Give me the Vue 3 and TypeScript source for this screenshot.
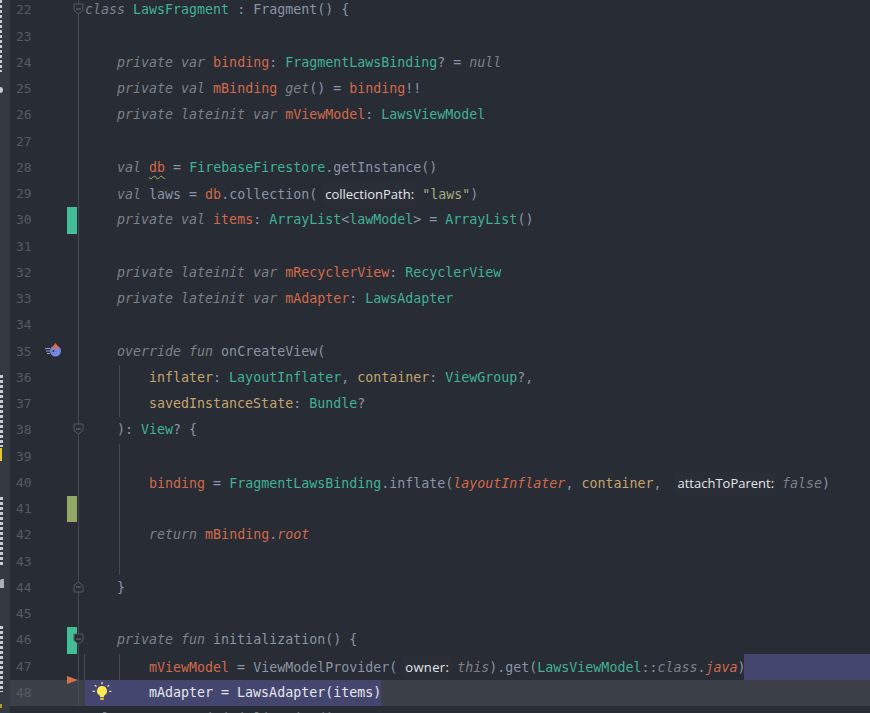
<script setup lang="ts">
type Tok = { t: string; c?: string }
type Row = { n: number; toks: Tok[]; mark?: string; fold?: string; guide?: boolean; cur?: boolean; sel?: boolean }

const k = (t: string) => ({ t, c: 'kw' })
const v = (t: string) => ({ t, c: 'prop' })
const ty = (t: string) => ({ t, c: 'type' })
const p = (t: string) => ({ t, c: 'plain' })
const par = (t: string) => ({ t, c: 'param' })
const hint = (t: string) => ({ t, c: 'hint' })

const rows: Row[] = [
  { n: 22, fold: 'open', toks: [k('class'), p(' '), ty('LawsFragment'), p(' : Fragment() {')] },
  { n: 23, toks: [] },
  { n: 24, toks: [p('    '), k('private var'), p(' '), v('binding'), p(': '), ty('FragmentLawsBinding'), p('? = '), k('null')] },
  { n: 25, toks: [p('    '), k('private val'), p(' '), v('mBinding'), p(' '), k('get'), p('() = '), v('binding'), p('!!')] },
  { n: 26, toks: [p('    '), k('private lateinit var'), p(' '), v('mViewModel'), p(': '), ty('LawsViewModel')] },
  { n: 27, toks: [] },
  { n: 28, toks: [p('    '), k('val'), p(' '), { t: 'db', c: 'prop warn' }, p(' = '), ty('FirebaseFirestore'), p('.getInstance()')] },
  { n: 29, toks: [p('    '), k('val'), p(' laws = '), v('db'), p('.collection( '), hint('collectionPath:'), { t: ' "laws"', c: 'str' }, p(')')] },
  { n: 30, mark: 'green', toks: [p('    '), k('private val'), p(' '), v('items'), p(': '), ty('ArrayList'), p('<'), ty('lawModel'), p('> = '), ty('ArrayList'), p('()')] },
  { n: 31, toks: [] },
  { n: 32, toks: [p('    '), k('private lateinit var'), p(' '), v('mRecyclerView'), p(': '), ty('RecyclerView')] },
  { n: 33, toks: [p('    '), k('private lateinit var'), p(' '), v('mAdapter'), p(': '), ty('LawsAdapter')] },
  { n: 34, toks: [] },
  { n: 35, toks: [p('    '), k('override fun'), p(' onCreateView(')] },
  { n: 36, guide: true, toks: [p('        '), par('inflater'), p(': '), ty('LayoutInflater'), p(', '), par('container'), p(': '), ty('ViewGroup'), p('?,')] },
  { n: 37, guide: true, toks: [p('        '), par('savedInstanceState'), p(': '), ty('Bundle'), p('?')] },
  { n: 38, fold: 'open', toks: [p('    ): '), ty('View'), p('? {')] },
  { n: 39, guide: true, toks: [] },
  { n: 40, guide: true, toks: [p('        '), v('binding'), p(' = '), ty('FragmentLawsBinding'), p('.inflate('), { t: 'layoutInflater', c: 'prop it' }, p(', '), par('container'), p(',  '), hint('attachToParent:'), p(' '), k('false'), p(')')] },
  { n: 41, guide: true, mark: 'olive', toks: [] },
  { n: 42, guide: true, toks: [p('        '), k('return'), p(' '), v('mBinding'), p('.'), { t: 'root', c: 'prop it' }] },
  { n: 43, guide: true, toks: [] },
  { n: 44, fold: 'close', toks: [p('    }')] },
  { n: 45, toks: [] },
  { n: 46, mark: 'green', fold: 'open', toks: [p('    '), k('private fun'), p(' initialization() {')] },
  { n: 47, guide: true, sel: true, toks: [p('        '), v('mViewModel'), p(' = ViewModelProvider( '), { t: 'owner:', c: 'hint hint-wide' }, p(' '), k('this'), p(').get('), ty('LawsViewModel'), p('::'), k('class'), p('.'), { t: 'java', c: 'prop it' }, p(')')] },
  { n: 48, cur: true, toks: [{ t: '        mAdapter = LawsAdapter(items)', c: 'seltext' }] },
]
</script>

<template>
  <div class="ide">
    <aside class="strip">
      <span class="strip-text s1"></span>
      <span class="strip-dot"></span>
      <span class="strip-text s2"></span>
      <span class="strip-warn"></span>
      <span class="strip-text s3"></span>
      <span class="strip-glyph"></span>
      <span class="strip-text s4"></span>
      <span class="strip-warn small"></span>
    </aside>
    <main class="editor">
      <div v-for="r in rows" :key="r.n" class="row" :class="{ 'row-cur': r.cur, 'row-sel': r.sel }">
        <div class="gutter">
          <span class="num">{{ r.n }}</span>
          <span class="marks">
            <span v-if="r.n === 35" class="override">
              <svg width="17" height="14" viewBox="0 0 17 14">
                <path d="M0 5.500h5M1 8h4M2 10.500h3" stroke="#8f9ee0" stroke-width="1" fill="none" />
                <circle cx="10.500" cy="8" r="5.500" fill="#7488e2" />
                <path d="M6.500 5.500 10.500 0 14.500 5.500Z" fill="#e2694f" />
                <circle cx="8.500" cy="8" r="1" fill="#27303f" />
              </svg>
            </span>
            <span v-if="r.mark" class="mark" :class="r.mark"></span>
            <span v-if="r.fold" class="fold" :class="r.fold">
              <svg width="11" height="12" viewBox="0 0 11 12">
                <path v-if="r.fold === 'close'" d="M1 11V4.500L5.500 1 10 4.500V11Z" fill="#282c34" stroke="#555b63" />
                <path v-else d="M1 1V7.500L5.500 11 10 7.500V1Z" fill="#282c34" stroke="#555b63" />
                <path d="M3 6H8" stroke="#6d727a" />
              </svg>
            </span>
            <span v-if="r.cur" class="arrow"></span>
          </span>
        </div>
        <div class="code" :class="{ guided: r.guide, guided2: r.n === 47 }">
          <svg v-if="r.cur" class="bulb" width="22" height="22" viewBox="0 0 20 20">
            <path d="M10 4.500a4.500 4.500 0 0 0-2.600 8.200c.6.500.9 1 .9 1.800h3.400c0-.8.300-1.300.9-1.800A4.500 4.500 0 0 0 10 4.500Z" fill="#fce94f" />
            <rect x="8.400" y="15.200" width="3.200" height="2" fill="#e0c93e" />
            <path d="M10 1v2M3.500 3.800l1.500 1.200M16.500 3.800 15 5M1.500 9.500h2M16.500 9.500h2" stroke="#eae2a0" stroke-width="1.200" />
          </svg>
          <span class="line"><span v-for="(tk, i) in r.toks" :key="i" :class="tk.c">{{ tk.t }}</span></span>
        </div>
      </div>
      <div class="crumb">lawsFragment.initialization()</div>
    </main>
  </div>
</template>

<style>
html, body { margin: 0; background: #282c34; overflow: hidden; }
</style>

<style scoped>
.ide { display: flex; width: 870px; height: 713px; overflow: hidden; background: #282c34; font-family: "DejaVu Sans Mono", monospace; font-size: 13.3px; }
.strip { flex: 0 0 10px; background: #353a42; display: flex; flex-direction: column; overflow: hidden; }
.strip-text { display: block; flex: none; width: 2px; background: repeating-linear-gradient(#c9ccd0 0 3px, transparent 3px 5px); }
.s1 { height: 72px; }
.strip-dot { flex: none; width: 3px; height: 6px; margin-top: 15px; background: #c9ccd0; border-radius: 0 3px 3px 0; }
.s2 { height: 72px; margin-top: 282px; width: 3px; }
.strip-warn { flex: none; width: 2px; height: 13px; margin-top: 1px; background: #e8c62a; }
.strip-warn.small { height: 4px; margin-top: 12px; background: #b59a2a; }
.s3 { height: 70px; margin-top: 36px; width: 3px; }
.strip-glyph { flex: none; width: 4px; height: 9px; margin-top: 12px; background: #aeb1b6; border-radius: 2px 0 0 0; }
.s4 { height: 66px; margin-top: 38px; width: 3px; }
.editor { flex: 1; margin-top: -2.6px; min-width: 0; }
.row { display: flex; height: 26.25px; line-height: 26.25px; position: relative; }
.gutter { flex: 0 0 75px; display: flex; position: relative; box-sizing: border-box; }
.row-cur .gutter { background: #3c4048; }
.num { width: 21px; padding-left: 6px; color: #565b63; flex: none; font-size: 13px; }
.marks { position: relative; flex: 1; }
.marks::after { content: ""; position: absolute; left: 41px; top: 0; bottom: 0; width: 1px; background: #454a52; }
.mark { position: absolute; left: 30px; top: 0; width: 10px; height: 100%; z-index: 1; }
.mark.green { background: #43bf98; }
.mark.olive { background: #94a868; }
.fold { position: absolute; left: 36px; top: 6px; z-index: 2; line-height: 0; }
.override { position: absolute; left: 8px; top: 4px; line-height: 0; }
.arrow { position: absolute; left: 30px; top: -4px; width: 0; height: 0; border-left: 11px solid #d3714c; border-top: 4px solid transparent; border-bottom: 4px solid transparent; z-index: 2; }
.code { flex: 1; white-space: pre; color: #8a94a6; position: relative; min-width: 0; }
.guided::before { content: ""; position: absolute; left: 34px; top: 0; bottom: 0; width: 1px; background: #454a52; }
.guided2::after { content: ""; position: absolute; left: -1px; top: 0; bottom: 0; width: 1px; background: #454a52; }
.row-sel .code { background: linear-gradient(90deg, transparent 659px, #444670 659px); }
.row-cur .code { background: linear-gradient(90deg, #444670 296px, #3c4048 296px); }
.line { position: relative; }
.bulb { position: absolute; left: 6px; top: 1px; }
.kw { color: #7d8187; font-style: italic; }
.prop { color: #d2694b; }
.it { font-style: italic; }
.type { color: #41b196; }
.plain { color: #8a94a6; }
.param { color: #c4a46e; }
.str { color: #a3ad7e; }
.hint { color: #e3e5e8; background: #2a2e37; box-shadow: 0 0 0 2px #2a2e37; font-family: "Open Sans", "Liberation Sans", sans-serif; font-size: 13px; }
.hint-wide { letter-spacing: 0.35px; }
.warn { text-decoration: underline wavy #a3b05a; text-decoration-thickness: 1px; text-underline-offset: 3px; }
.seltext { color: #e4e6ea; }
.crumb { padding-left: 92px; color: #7c8088; line-height: 20px; margin-top: 3px; }
</style>
